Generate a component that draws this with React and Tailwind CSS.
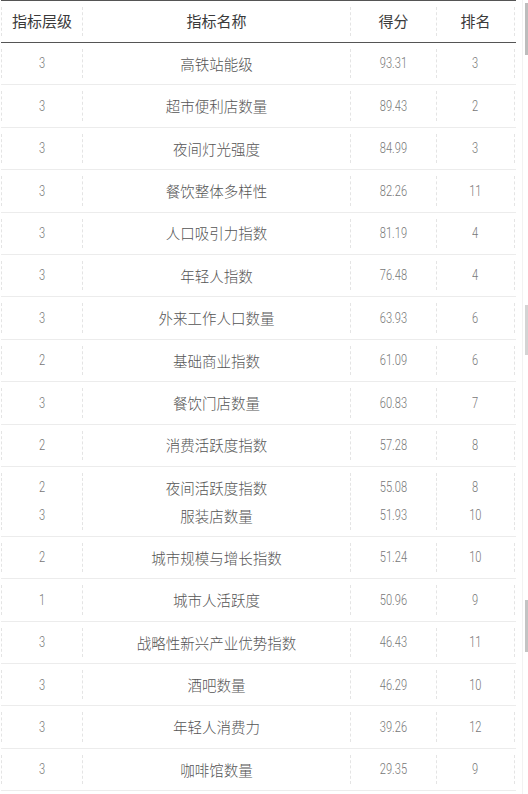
const rows = [
  { level: ['3'], name: ['高铁站能级'], score: ['93.31'], rank: ['3'] },
  { level: ['3'], name: ['超市便利店数量'], score: ['89.43'], rank: ['2'] },
  { level: ['3'], name: ['夜间灯光强度'], score: ['84.99'], rank: ['3'] },
  { level: ['3'], name: ['餐饮整体多样性'], score: ['82.26'], rank: ['11'] },
  { level: ['3'], name: ['人口吸引力指数'], score: ['81.19'], rank: ['4'] },
  { level: ['3'], name: ['年轻人指数'], score: ['76.48'], rank: ['4'] },
  { level: ['3'], name: ['外来工作人口数量'], score: ['63.93'], rank: ['6'] },
  { level: ['2'], name: ['基础商业指数'], score: ['61.09'], rank: ['6'] },
  { level: ['3'], name: ['餐饮门店数量'], score: ['60.83'], rank: ['7'] },
  { level: ['2'], name: ['消费活跃度指数'], score: ['57.28'], rank: ['8'] },
  { level: ['2', '3'], name: ['夜间活跃度指数', '服装店数量'], score: ['55.08', '51.93'], rank: ['8', '10'] },
  { level: ['2'], name: ['城市规模与增长指数'], score: ['51.24'], rank: ['10'] },
  { level: ['1'], name: ['城市人活跃度'], score: ['50.96'], rank: ['9'] },
  { level: ['3'], name: ['战略性新兴产业优势指数'], score: ['46.43'], rank: ['11'] },
  { level: ['3'], name: ['酒吧数量'], score: ['46.29'], rank: ['10'] },
  { level: ['3'], name: ['年轻人消费力'], score: ['39.26'], rank: ['12'] },
  { level: ['3'], name: ['咖啡馆数量'], score: ['29.35'], rank: ['9'] },
];

const cjk = { fontFamily: '"Noto Sans CJK SC", "Noto Sans", sans-serif' };

function Num({ children }) {
  return (
    <span className="inline-block scale-x-[0.74] text-[15px] font-light text-[#777]" style={{ fontFamily: 'Roboto, "Liberation Sans", sans-serif' }}>
      {children}
    </span>
  );
}

function Cell({ w, last, children }) {
  return (
    <div className={`${w} flex flex-col items-center justify-center border-l border-dashed border-[#e4e4e4] ${last ? 'border-r' : ''} my-[6px]`}>
      {children}
    </div>
  );
}

function Line({ double, children }) {
  return <div className={`${double ? 'h-[28px]' : ''} flex items-center justify-center`}>{children}</div>;
}

export default function App() {
  return (
    <div className="w-[528px] h-[794px] bg-white flex overflow-hidden" style={cjk}>
      <div className="w-[515px] shrink-0 ml-[1px]">
        {/* 表头 */}
        <div className="flex h-[43px] border-t border-b border-[#555] text-[15px] text-[#3a3a3a]">
          <div className="w-[81px] flex items-center justify-center border-l border-dashed border-[#e4e4e4] my-[6px]">指标层级</div>
          <div className="w-[268px] flex items-center justify-center border-l border-dashed border-[#e4e4e4] my-[6px]">指标名称</div>
          <div className="w-[86px] flex items-center justify-center border-l border-dashed border-[#e4e4e4] my-[6px]">得分</div>
          <div className="w-[79px] flex items-center justify-center border-l border-r border-dashed border-[#e4e4e4] my-[6px]">排名</div>
        </div>
        {rows.map((r, i) => {
          const d = r.name.length > 1;
          return (
            <div key={i} className={`flex ${d ? 'h-[70px]' : 'h-[42.4px]'} border-b border-[#ececec]`}>
              <Cell w="w-[81px]">
                {r.level.map((v, j) => <Line key={j} double={d}><Num>{v}</Num></Line>)}
              </Cell>
              <Cell w="w-[268px]">
                {r.name.map((v, j) => <Line key={j} double={d}><span className="text-[14.5px] font-light text-[#555]">{v}</span></Line>)}
              </Cell>
              <Cell w="w-[86px]">
                {r.score.map((v, j) => <Line key={j} double={d}><Num>{v}</Num></Line>)}
              </Cell>
              <Cell w="w-[79px]" last>
                {r.rank.map((v, j) => <Line key={j} double={d}><Num>{v}</Num></Line>)}
              </Cell>
            </div>
          );
        })}
      </div>
      {/* 滚动条 */}
      <div className="flex-1 flex justify-end border-l border-[#f2f2f2] ml-[6px]">
        <div className="w-[3px] flex flex-col">
          <div className="h-[52px] mt-[3px] bg-[#bdbdbd]" />
          <div className="h-[250px]" />
          <div className="h-[50px] bg-[#d4d4d4]" />
          <div className="h-[245px]" />
          <div className="h-[52px] bg-[#c4c4c4]" />
        </div>
      </div>
    </div>
  );
}
